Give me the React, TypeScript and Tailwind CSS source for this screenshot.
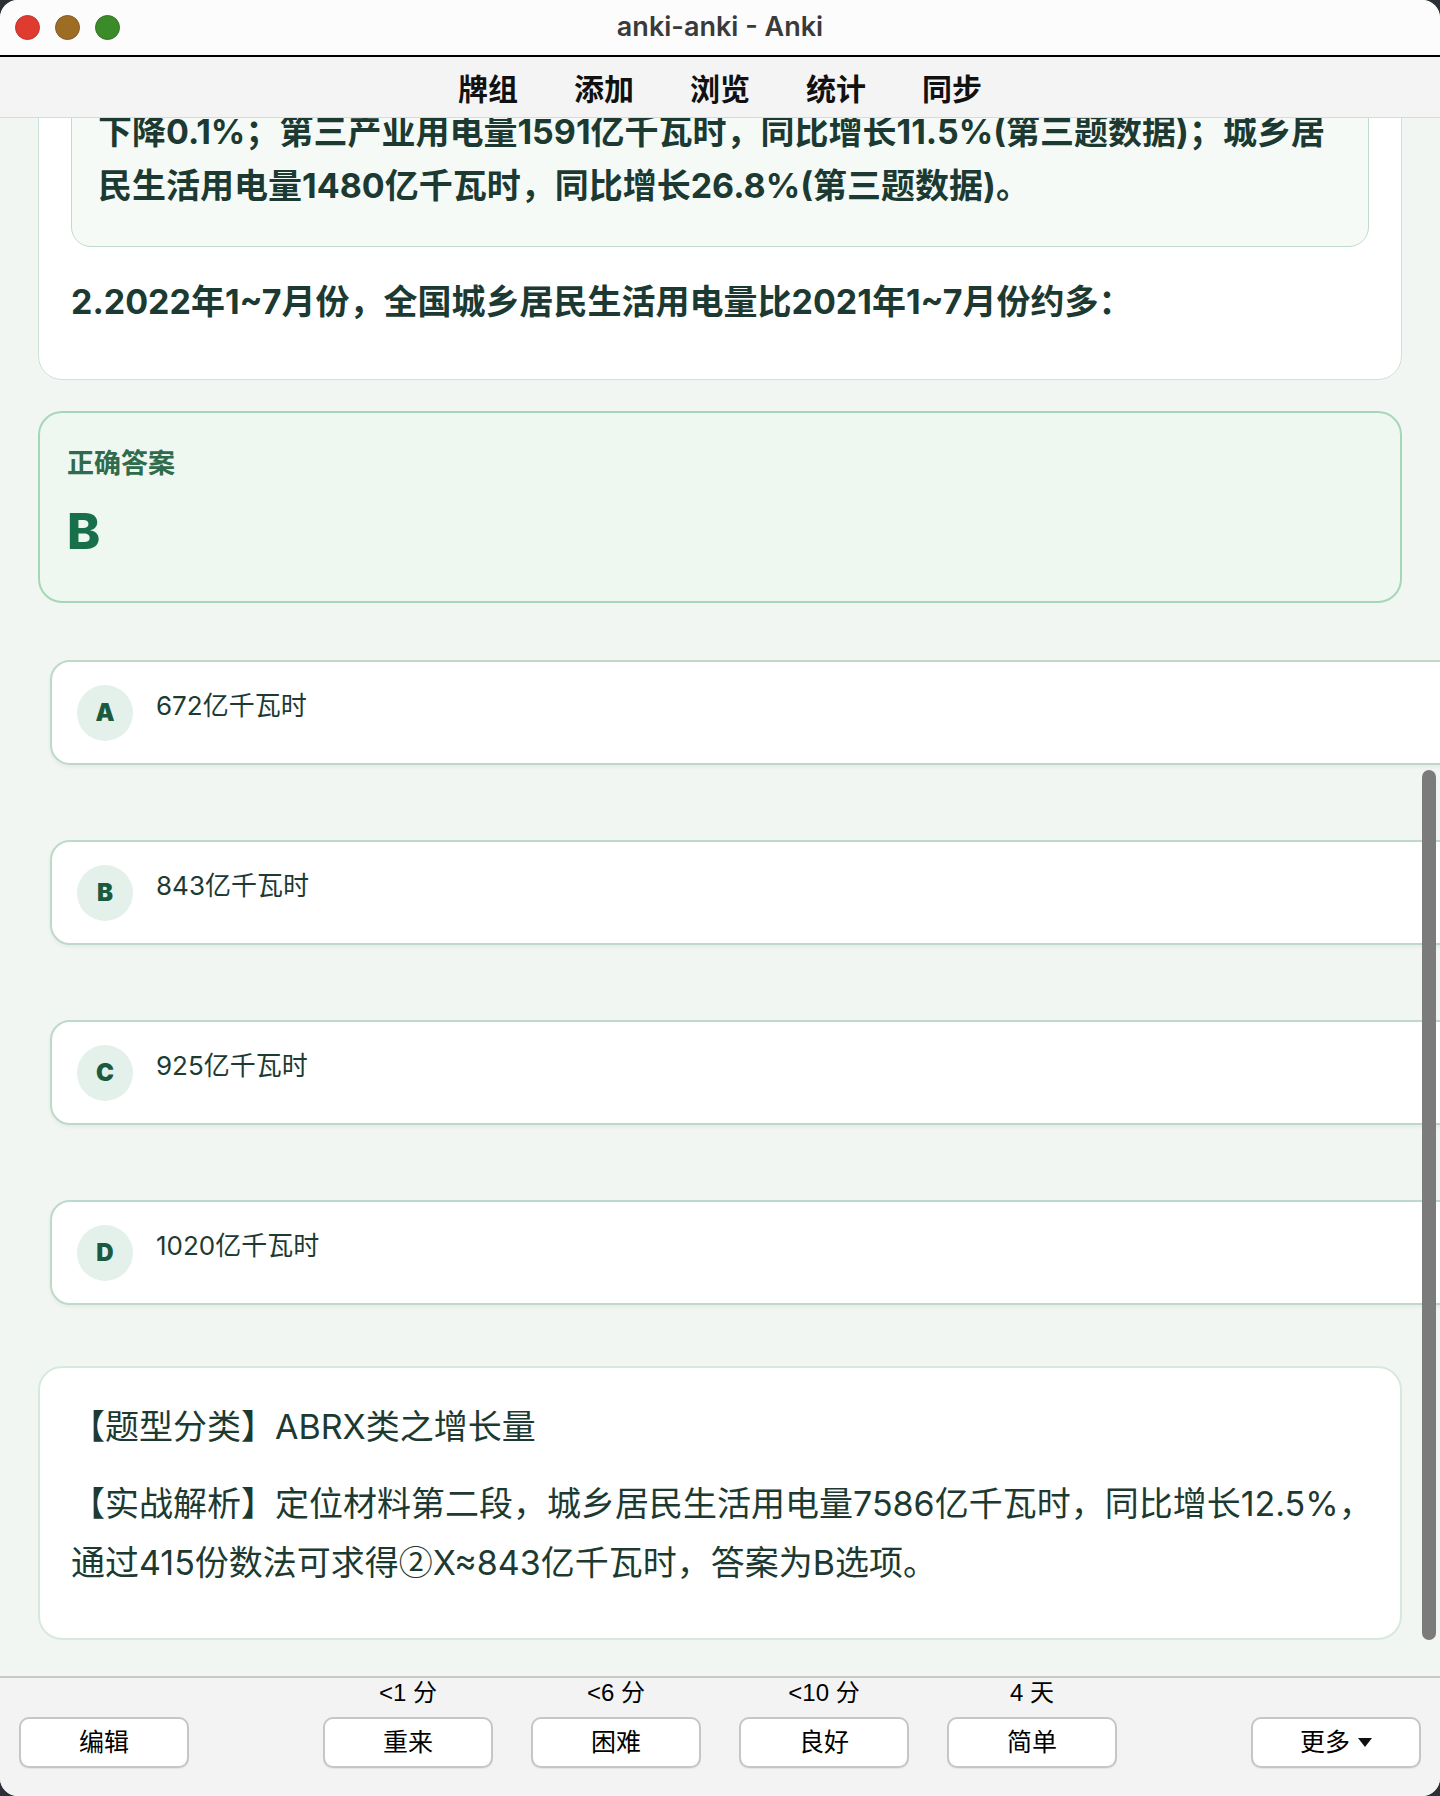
import React from "react"

const options = [
  { key: "A", text: "672亿千瓦时" },
  { key: "B", text: "843亿千瓦时" },
  { key: "C", text: "925亿千瓦时" },
  { key: "D", text: "1020亿千瓦时" },
]

const ratings = [
  { due: "<1 分", label: "重来" },
  { due: "<6 分", label: "困难" },
  { due: "<10 分", label: "良好" },
  { due: "4 天", label: "简单" },
]

function Btn({ children }: { children: React.ReactNode }) {
  return (
    <button className="flex h-[51px] w-[170px] items-center justify-center gap-[8px] rounded-[10px] border-2 border-[#c6c6c6] bg-white text-[25px] leading-none text-black shadow-[0_1px_1px_rgba(0,0,0,0.06)]">
      {children}
    </button>
  )
}

export default function App() {
  return (
    <div className="h-[1796px] w-[1440px] overflow-hidden bg-[#2b2f36] font-['Inter','Noto_Sans_CJK_SC',sans-serif]">
      <div className="flex h-full flex-col overflow-hidden rounded-[18px] bg-[#f2f6f3]">
        {/* title bar */}
        <div className="flex h-[55px] shrink-0 items-center bg-[#fcfcfc]">
          <div className="flex w-[120px] items-center gap-[15px] pl-[15px]">
            <span className="h-[25px] w-[25px] rounded-full border border-[#c2352b] bg-[#df3b30]" />
            <span className="h-[25px] w-[25px] rounded-full border border-[#86591c] bg-[#9d6d25]" />
            <span className="h-[25px] w-[25px] rounded-full border border-[#2f7421] bg-[#3c8b2b]" />
          </div>
          <div className="flex-1 text-center text-[27px] font-semibold text-[#3a3a3a]">anki-anki - Anki</div>
          <div className="w-[120px]" />
        </div>
        <div className="h-[2px] shrink-0 bg-black" />

        {/* toolbar */}
        <div className="flex h-[61px] shrink-0 items-center justify-center gap-[56px] border-b border-[#dadada] bg-[#f4f4f4] font-['Noto_Sans_CJK_SC',sans-serif] text-[30px] font-bold text-[#111]">
          <span>牌组</span>
          <span>添加</span>
          <span>浏览</span>
          <span>统计</span>
          <span>同步</span>
        </div>

        {/* reviewer */}
        <div className="relative flex-1 overflow-hidden">
          <div className="-mt-[74px] px-[38px] text-[#1c3a31]">
            <div className="rounded-[24px] border border-[#cce3d7] bg-white px-[32px] pt-[32px] pb-[50px]">
              <div className="rounded-[20px] border border-[#bfdacc] bg-[#f5faf7] px-[26px] pt-[27px] pb-[33px] text-[34px] font-bold leading-[54px]">
                <div className="whitespace-nowrap">下降0.1%；第三产业用电量1591亿千瓦时，同比增长11.5%(第三题数据)；城乡居</div>
                <div className="whitespace-nowrap">民生活用电量1480亿千瓦时，同比增长26.8%(第三题数据)。</div>
              </div>
              <div className="mt-[28px] whitespace-nowrap text-[34px] font-bold leading-[54px]">
                2.2022年1~7月份，全国城乡居民生活用电量比2021年1~7月份约多：
              </div>
            </div>

            <div className="mt-[31px] rounded-[24px] border-2 border-[#a6d6b8] bg-[#eef8f1] pl-[27px] pt-[33px] pb-[40px]">
              <div className="text-[27px] font-bold leading-[36px] text-[#2f6b4c]">正确答案</div>
              <div className="mt-[19px] text-[50px] font-extrabold leading-[60px] text-[#18704b]">B</div>
            </div>

            <div className="mt-[57px] ml-[12px] flex w-[1420px] flex-col gap-[75px]">
              {options.map((o) => (
                <div
                  key={o.key}
                  className="flex h-[105px] items-center rounded-[20px] border-2 border-[#bdd9cb] bg-white pl-[25px] shadow-[0_2px_4px_rgba(0,0,0,0.05)]"
                >
                  <span className="flex h-[56px] w-[56px] items-center justify-center rounded-full bg-[#e4f0ea] text-[24px] font-black text-[#1a5a3e]">
                    {o.key}
                  </span>
                  <span className="mb-[14px] ml-[23px] text-[26px] text-[#1d3b33]">{o.text}</span>
                </div>
              ))}
            </div>

            <div className="mt-[61px] rounded-[24px] border-2 border-[#d6e9df] bg-white pl-[31px] pt-[30px] pb-[47px] text-[34px] leading-[57px]">
              <div className="whitespace-nowrap">【题型分类】ABRX类之增长量</div>
              <div className="mt-[20px]">
                <div className="whitespace-nowrap">【实战解析】定位材料第二段，城乡居民生活用电量7586亿千瓦时，同比增长12.5%，</div>
                <div className="whitespace-nowrap">
                  通过415份数法可求得<span className="font-['Noto_Sans_CJK_SC',sans-serif]">②</span>X≈843亿千瓦时，答案为B选项。
                </div>
              </div>
            </div>
          </div>

          {/* scrollbar */}
          <div className="absolute top-[652px] right-[4px] h-[870px] w-[14px] rounded-full bg-[#7b7b7b]" />
        </div>

        {/* answer buttons */}
        <div className="flex h-[120px] shrink-0 items-end justify-between border-t-2 border-[#c8c8c8] bg-[#f3f3f3] px-[19px] pb-[28px] font-['Liberation_Sans','Noto_Sans_CJK_SC',sans-serif]">
          <Btn>编辑</Btn>
          <div className="flex gap-[38px]">
            {ratings.map((r) => (
              <div key={r.label} className="flex flex-col items-center">
                <div className="text-[24px] leading-[30px] text-black">{r.due}</div>
                <div className="mt-[9px]">
                  <Btn>{r.label}</Btn>
                </div>
              </div>
            ))}
          </div>
          <Btn>
            <span>更多</span>
            <svg width="14" height="9" viewBox="0 0 14 9">
              <path d="M0 0h14L7 9z" fill="#111" />
            </svg>
          </Btn>
        </div>
      </div>
    </div>
  )
}
